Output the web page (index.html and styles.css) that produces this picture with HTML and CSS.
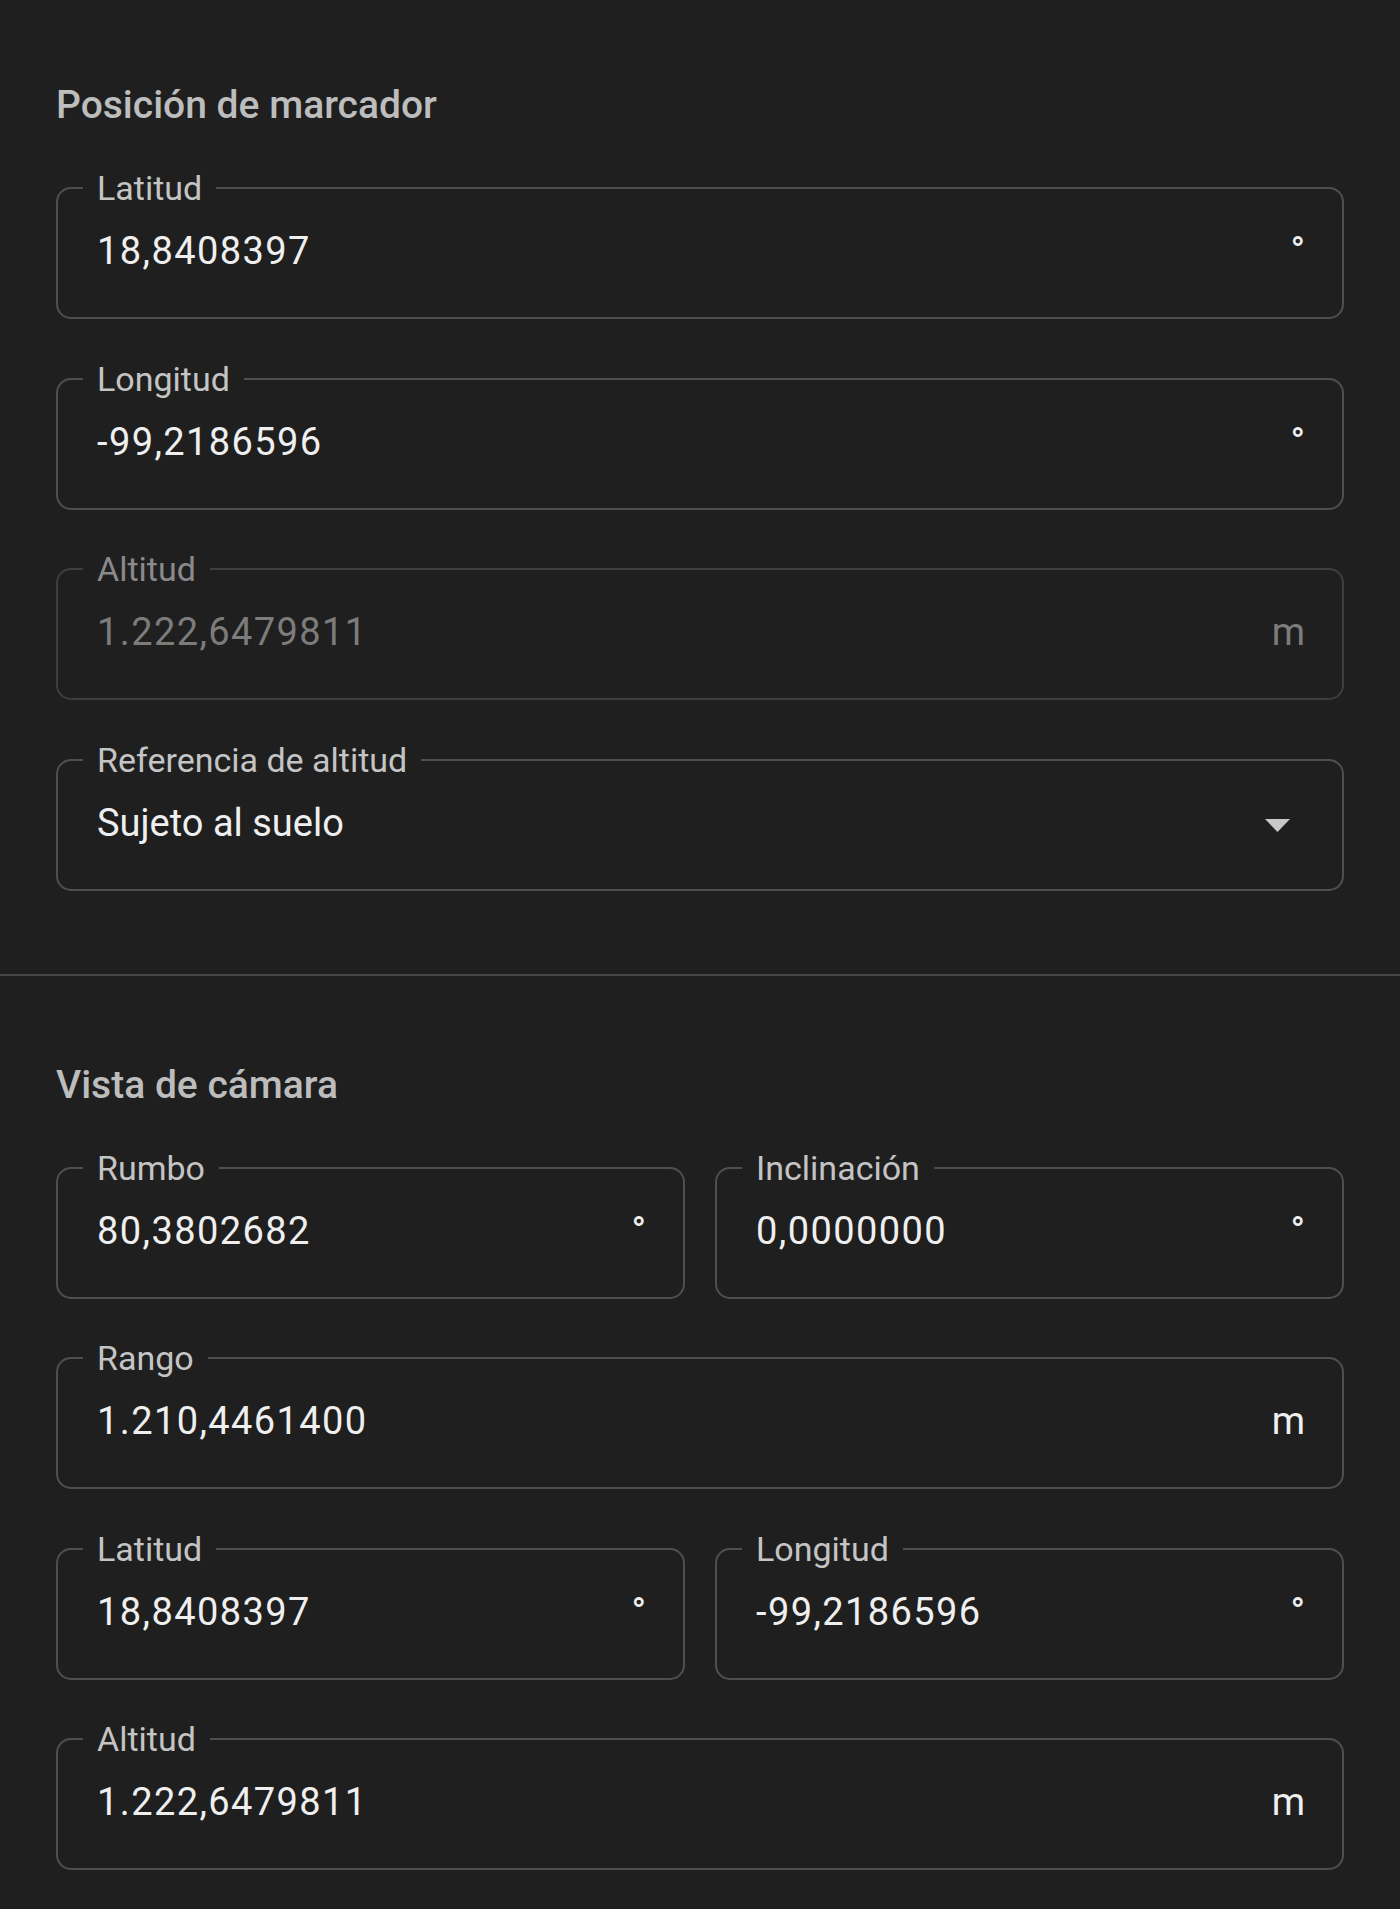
FILE: index.html
```html
<!DOCTYPE html>
<html lang="es">
	<head>
		<meta charset="utf-8">
		<meta name="viewport" content="width=device-width, initial-scale=1">
		<title>Propiedades del marcador</title>
		<link rel="stylesheet" href="styles.css">
	</head>
	<body>
		<main class="panel">
			<section class="group">
				<h2 class="group-title">Posición de marcador</h2>
				<div class="fields">
					<fieldset class="field">
						<legend class="field-label">Latitud</legend>
						<div class="field-row"><span class="field-value">18,8408397</span><span class="field-unit is-degree">°</span></div>
					</fieldset>
					<fieldset class="field">
						<legend class="field-label">Longitud</legend>
						<div class="field-row"><span class="field-value">-99,2186596</span><span class="field-unit is-degree">°</span></div>
					</fieldset>
					<fieldset class="field is-disabled">
						<legend class="field-label">Altitud</legend>
						<div class="field-row"><span class="field-value">1.222,6479811</span><span class="field-unit">m</span></div>
					</fieldset>
					<fieldset class="field">
						<legend class="field-label">Referencia de altitud</legend>
						<div class="field-row">
							<span class="field-value is-text">Sujeto al suelo</span>
							<svg class="field-arrow" width="25" height="13" viewBox="0 0 25 13"><path d="M0 0 H25 L12.5 13 Z" fill="#c8c8c8"/></svg>
						</div>
					</fieldset>
				</div>
			</section>

			<hr class="divider">

			<section class="group">
				<h2 class="group-title">Vista de cámara</h2>
				<div class="fields">
					<div class="pair">
						<fieldset class="field">
							<legend class="field-label">Rumbo</legend>
							<div class="field-row"><span class="field-value">80,3802682</span><span class="field-unit is-degree">°</span></div>
						</fieldset>
						<fieldset class="field">
							<legend class="field-label">Inclinación</legend>
							<div class="field-row"><span class="field-value">0,0000000</span><span class="field-unit is-degree">°</span></div>
						</fieldset>
					</div>
					<fieldset class="field">
						<legend class="field-label">Rango</legend>
						<div class="field-row"><span class="field-value">1.210,4461400</span><span class="field-unit">m</span></div>
					</fieldset>
					<div class="pair">
						<fieldset class="field">
							<legend class="field-label">Latitud</legend>
							<div class="field-row"><span class="field-value">18,8408397</span><span class="field-unit is-degree">°</span></div>
						</fieldset>
						<fieldset class="field">
							<legend class="field-label">Longitud</legend>
							<div class="field-row"><span class="field-value">-99,2186596</span><span class="field-unit is-degree">°</span></div>
						</fieldset>
					</div>
					<fieldset class="field">
						<legend class="field-label">Altitud</legend>
						<div class="field-row"><span class="field-value">1.222,6479811</span><span class="field-unit">m</span></div>
					</fieldset>
				</div>
			</section>
		</main>
	</body>
</html>
```

FILE: styles.css
```css
* {
	box-sizing: border-box;
}

html {
	background: #1f1f1f;
}

body {
	margin: 0;
	min-height: 100vh;
	background: #1f1f1f;
	color: #ececec;
	font-family: Roboto, "Liberation Sans", sans-serif;
}

.group {
	padding: 85px 56px 83px;
}

.group:first-child {
	padding-top: 81px;
}

.group:last-child {
	padding-bottom: 39px;
}

.group-title {
	margin: 0 0 39px;
	font-size: 39px;
	line-height: 48px;
	font-weight: 500;
	color: #bdbdbd;
}

.fields {
	display: flex;
	flex-direction: column;
	gap: 39.5px;
}

.pair {
	display: grid;
	grid-template-columns: 1fr 1fr;
	column-gap: 30px;
}

.field {
	margin: 0;
	min-width: 0;
	padding: 21px 25px 44px;
	border: 2.5px solid #4f4f4f;
	border-radius: 15px;
}

.field-label {
	padding: 0 14px;
	font-size: 34px;
	line-height: 40px;
	color: #c4c4c4;
}

.field-row {
	display: flex;
	align-items: baseline;
	justify-content: space-between;
	padding: 0 12px 0 14px;
	font-size: 38px;
	line-height: 44px;
}

.field-value {
	color: #efefef;
	letter-spacing: 1.4px;
}

.field-value.is-text {
	letter-spacing: 0;
}

.field-unit {
	color: #efefef;
}

.field-unit.is-degree {
	font-weight: 500;
}

.field-arrow {
	align-self: center;
	margin: 6px 15px 0 0;
}

.field.is-disabled {
	border-color: #3e3e3e;
}

.field.is-disabled .field-label {
	color: #8a8a8a;
}

.field.is-disabled .field-value,
.field.is-disabled .field-unit {
	color: #7c7c7c;
}

.divider {
	margin: 0;
	border: 0;
	height: 2px;
	background: #474747;
}
```
